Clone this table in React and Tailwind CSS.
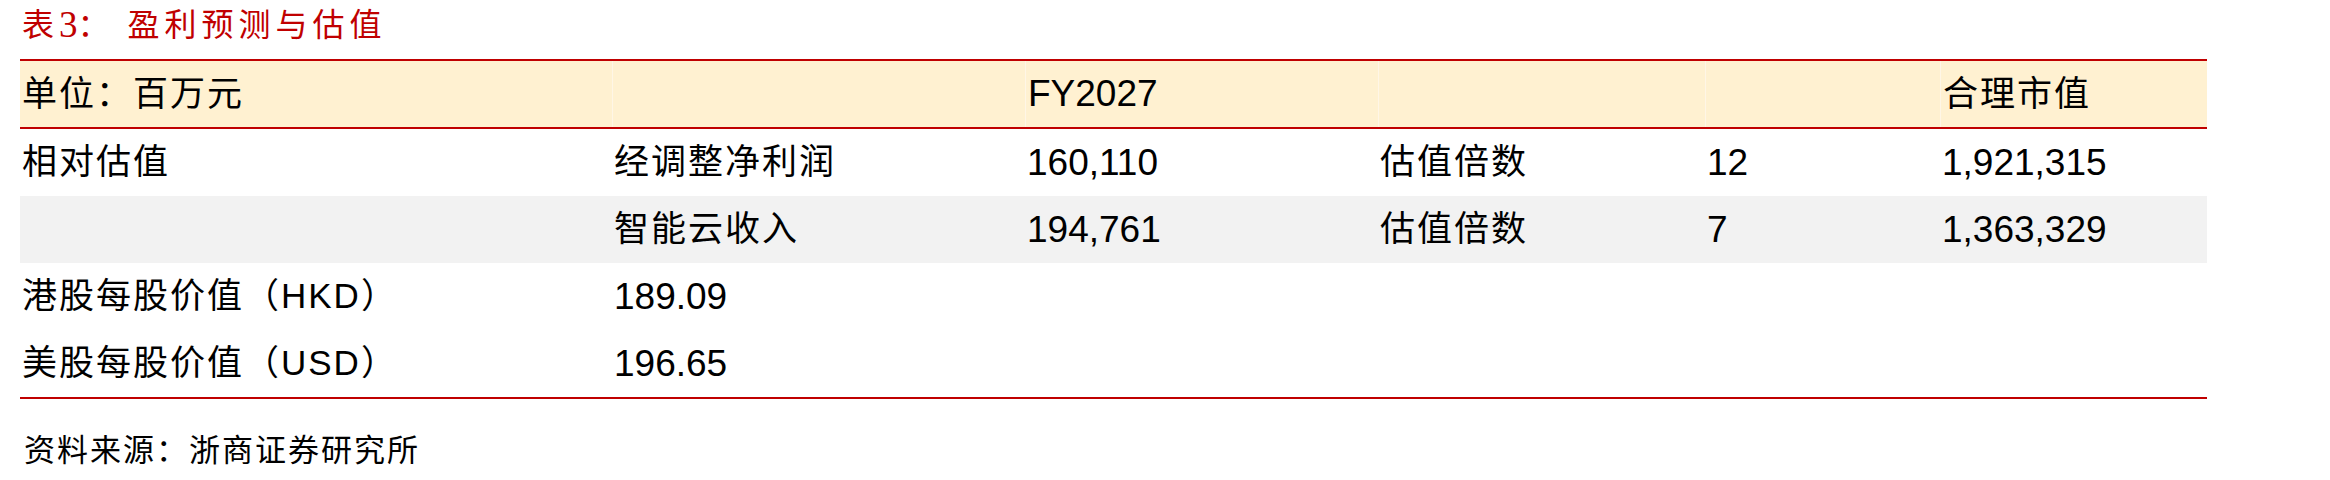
import React from "react";

const cols = "grid grid-cols-[592px_413px_353px_327px_235px_267px]";
const cjk = "text-[35px] tracking-[2px]";
const num = "text-[37px]";

const rows = [
  { bg: "bg-white", cells: [["相对估值", cjk], ["经调整净利润", cjk], ["160,110", num], ["估值倍数", cjk], ["12", num], ["1,921,315", num]] },
  { bg: "bg-[#f2f2f2]", cells: [["", cjk], ["智能云收入", cjk], ["194,761", num], ["估值倍数", cjk], ["7", num], ["1,363,329", num]] },
  { bg: "bg-white", cells: [["港股每股价值（HKD）", cjk], ["189.09", num], ["", num], ["", num], ["", num], ["", num]] },
  { bg: "bg-white", cells: [["美股每股价值（USD）", cjk], ["196.65", num], ["", num], ["", num], ["", num], ["", num]] },
];

const Cell = ({ text, cls, extra = "" }) => (
  <div className={`flex items-center pl-[2px] whitespace-nowrap ${cls} ${extra}`}>{text}</div>
);

const App = () => {
  return (
    <div className="w-[2330px] h-[480px] bg-white text-black font-['Liberation_Sans','Noto_Sans_CJK_SC',sans-serif] overflow-hidden">
      {/* title */}
      <div className="h-[50px] flex items-center pl-[22px] text-[32px] tracking-[5px] text-[#c00000] font-['Liberation_Serif','Noto_Sans_CJK_SC',serif]">
        表<span className="text-[37px] tracking-[0px]">3</span>： 盈利预测与估值
      </div>

      <div className="ml-[20px] mt-[9px] w-[2187px] border-b-2 border-[#c00000]">
        {/* header */}
        <div className={`${cols} h-[70px] bg-[#fff1d1] border-y-2 border-[#c00000]`}>
          <Cell text="单位：百万元" cls={cjk} />
          <Cell text="" cls={cjk} extra="border-l border-[#fff6e6]" />
          <Cell text="FY2027" cls={num} extra="border-l border-[#fff6e6]" />
          <Cell text="" cls={cjk} extra="border-l border-[#fff6e6]" />
          <Cell text="" cls={cjk} extra="border-l border-[#fff6e6]" />
          <Cell text="合理市值" cls={cjk} extra="border-l border-[#fff6e6]" />
        </div>

        {rows.map((row, i) => (
          <div key={i} className={`${cols} h-[67px] ${row.bg}`}>
            {row.cells.map(([text, cls], j) => (
              <Cell key={j} text={text} cls={cls} />
            ))}
          </div>
        ))}
      </div>

      {/* source */}
      <div className="mt-[36px] h-[32px] flex items-center pl-[24px] text-[31px] tracking-[2px]">
        资料来源：浙商证券研究所
      </div>
    </div>
  );
};

export default App;
